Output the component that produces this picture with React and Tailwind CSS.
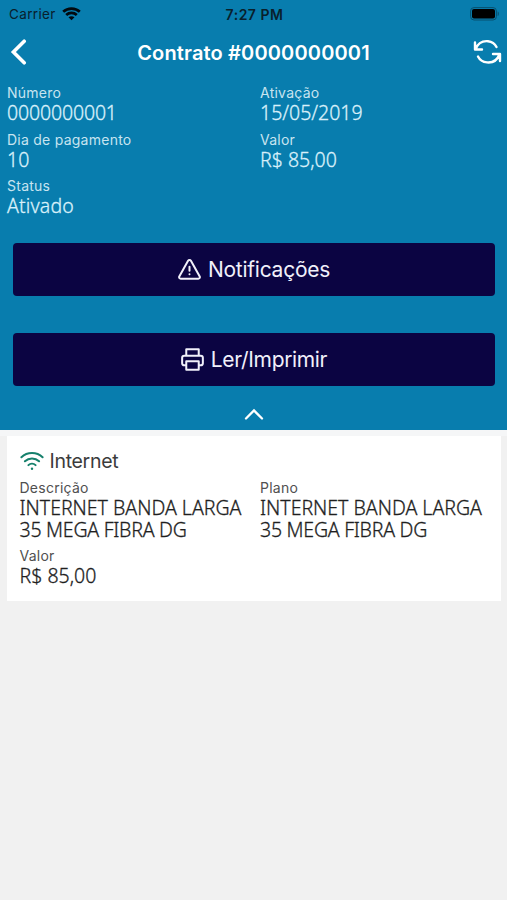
function Field({ label, value, labelClass, valueClass = '', width = 'w-[253px]' }) {
  return (
    <div className={`${width} mb-[7.5px]`}>
      <div className={`h-[17px] text-[14px] leading-[15px] tracking-[0.25px] whitespace-nowrap ${labelClass}`}>{label}</div>
      <div className={`font-['Noto_Sans','Open_Sans',sans-serif] font-light text-[19.5px] leading-[22px] whitespace-pre-line [-webkit-text-stroke:0.3px_currentColor] ${valueClass}`}>{value}</div>
    </div>
  );
}

function ActionButton({ icon, children, className }) {
  return (
    <button className={`mx-[13px] flex h-[53px] w-[482px] items-center justify-center rounded-[4px] bg-[#0b0442] text-[21px] text-[#f1f0fa] ${className}`}>
      {icon}
      <span className="pt-px whitespace-nowrap">{children}</span>
    </button>
  );
}

export default function App() {
  return (
    <div className="h-[900px] w-[507px] overflow-hidden bg-[#f1f1f1] font-['Inter',sans-serif]">
      <header className="flex h-[430px] flex-col bg-[#087dae]">
        <div className="grid h-[28px] grid-cols-3 items-center pr-[7px] pl-[9px] text-[13.5px] text-[#08202c]">
          <div className="flex items-center gap-[6px]">
            <span className="tracking-[0.35px]">Carrier</span>
            <svg width="19" height="14" viewBox="0 0 19 14" fill="none" stroke="#020a0f" strokeWidth="2.7">
              <path d="M1.2 4.8C5.7.5 13.3.5 17.8 4.8" />
              <path d="M4.2 8C7.2 5.2 11.8 5.2 14.8 8" />
              <path d="M9.5 13.3 6.5 10.3C8.2 8.8 10.8 8.8 12.5 10.3Z" fill="#020a0f" stroke="none" />
            </svg>
          </div>
          <div className="text-center text-[14px] font-semibold tracking-[0.5px] whitespace-nowrap">7:27 PM</div>
          <svg className="justify-self-end" width="30" height="14" viewBox="0 0 30 14">
            <rect x="0.6" y="0.6" width="25.8" height="12.4" rx="3.4" fill="none" stroke="#07506f" strokeWidth="1" />
            <rect x="2" y="2" width="23" height="9.6" rx="2" fill="#000" />
            <path d="M27.7 4.5C29.2 5 29.2 8.5 27.7 9Z" fill="#07506f" />
          </svg>
        </div>

        <div className="flex h-[48px] items-center justify-between pr-[5px] pl-[10px] text-white">
          <svg width="18" height="26" viewBox="0 0 18 26" fill="none" stroke="currentColor" strokeWidth="3.6" strokeLinecap="round" strokeLinejoin="miter">
            <path d="M14.2 2.2 3.4 13 14.2 23.8" />
          </svg>
          <h1 className="pt-px pl-[6px] text-[20px] font-semibold tracking-[0.15px] whitespace-nowrap">Contrato #0000000001</h1>
          <svg width="29" height="26" viewBox="0 0 29 26" fill="none" stroke="currentColor" strokeWidth="2.4" strokeLinecap="round" strokeLinejoin="round">
            <path d="M2 3.5V10.5H9M2.6 10C5.2 3.5 10.5 1.8 15 2.2C19 2.6 22 5 23.5 8" />
            <path d="M27 22V15H20M26.4 15.5C24 22 18.5 23.8 14 23.4C9.8 23 6.5 20.5 5 17.5" />
          </svg>
        </div>

        <div className="flex flex-wrap pt-[9px] pl-[7px] -mr-3">
          <Field label="Número" value="0000000001" labelClass="text-[#c7e4f0]" valueClass="text-[#d9f0fa] tracking-[-0.15px]" />
          <Field label="Ativação" value="15/05/2019" labelClass="text-[#c7e4f0]" valueClass="text-[#d9f0fa]" />
          <Field label="Dia de pagamento" value="10" labelClass="text-[#c7e4f0]" valueClass="text-[#d9f0fa]" />
          <Field label="Valor" value="R$ 85,00" labelClass="text-[#c7e4f0]" valueClass="text-[#d9f0fa]" />
          <Field label="Status" value="Ativado" labelClass="text-[#c7e4f0]" valueClass="text-[#d9f0fa] tracking-[0.15px]" />
        </div>

        <ActionButton
          className="mt-[18.5px] gap-[7px] tracking-[-0.25px]"
          icon={
            <svg width="23" height="21" viewBox="0 0 24 22" fill="none" stroke="currentColor" strokeWidth="2.1" strokeLinecap="round" strokeLinejoin="round">
              <path d="M10.5 1.9 1.3 18.3C.8 19.6 1.5 20.6 2.8 20.6H21.2C22.5 20.6 23.2 19.6 22.7 18.3L13.5 1.9C12.8.8 11.2.8 10.5 1.9Z" />
              <path d="M12 8V12.2M12 16V16.1" />
            </svg>
          }
        >
          Notificações
        </ActionButton>
        <ActionButton
          className="mt-[37px] gap-[7px] tracking-[-0.35px]"
          icon={
            <svg width="23" height="23" viewBox="0 0 24 24" fill="none" stroke="currentColor" strokeWidth="2.1" strokeLinejoin="round">
              <path d="M5.5 8V1.2H18.5V8" />
              <path d="M5.5 18H3.4C2 18 1.2 17.2 1.2 15.8V10.2C1.2 8.8 2 8 3.4 8H20.6C22 8 22.8 8.8 22.8 10.2V15.8C22.8 17.2 22 18 20.6 18H18.5" />
              <rect x="5.5" y="13.8" width="13" height="9" />
            </svg>
          }
        >
          Ler/Imprimir
        </ActionButton>
        <svg className="mt-[21px] self-center" width="20" height="14" viewBox="0 0 20 14" fill="none" stroke="#fff" strokeWidth="2.3" strokeLinecap="round">
          <path d="M2 11.5 10 3.5 18 11.5" />
        </svg>
      </header>

      <div className="h-[6px] bg-[#f5f6f7]" />
      <section className="ml-[7px] h-[165px] w-[494px] bg-white pt-[12px] pl-[12.5px]">
        <div className="mb-[5.5px] flex h-[26px] items-center gap-[6px] text-[19.5px] tracking-[-0.3px] text-[#3c3c3c]">
          <svg width="24" height="18" viewBox="0 0 24 18" fill="none" stroke="#16806c" strokeWidth="2" strokeLinecap="round">
            <path d="M1.4 5.3C7.3-.3 16.7-.3 22.6 5.3" />
            <path d="M4.9 9.3C8.9 5.6 15.1 5.6 19.1 9.3" />
            <path d="M8.4 13.1C10.4 11.2 13.6 11.2 15.6 13.1" />
            <circle cx="12" cy="16.7" r="1.2" fill="#16806c" stroke="none" />
          </svg>
          <span className="pt-[2px]">Internet</span>
        </div>
        <div className="flex flex-wrap">
          <Field width="w-[240.5px]" label="Descrição" value={<>INTERNET BANDA LARGA<br /><span className="tracking-[-0.25px]">35 MEGA FIBRA DG</span></>} labelClass="text-[#505050]" valueClass="text-[#1f1f1f]" />
          <Field width="w-[240.5px]" label="Plano" value={<>INTERNET BANDA LARGA<br /><span className="tracking-[-0.25px]">35 MEGA FIBRA DG</span></>} labelClass="text-[#505050]" valueClass="text-[#1f1f1f]" />
          <Field width="w-[240.5px]" label="Valor" value="R$ 85,00" labelClass="text-[#505050]" valueClass="text-[#1f1f1f]" />
        </div>
      </section>
    </div>
  );
}
